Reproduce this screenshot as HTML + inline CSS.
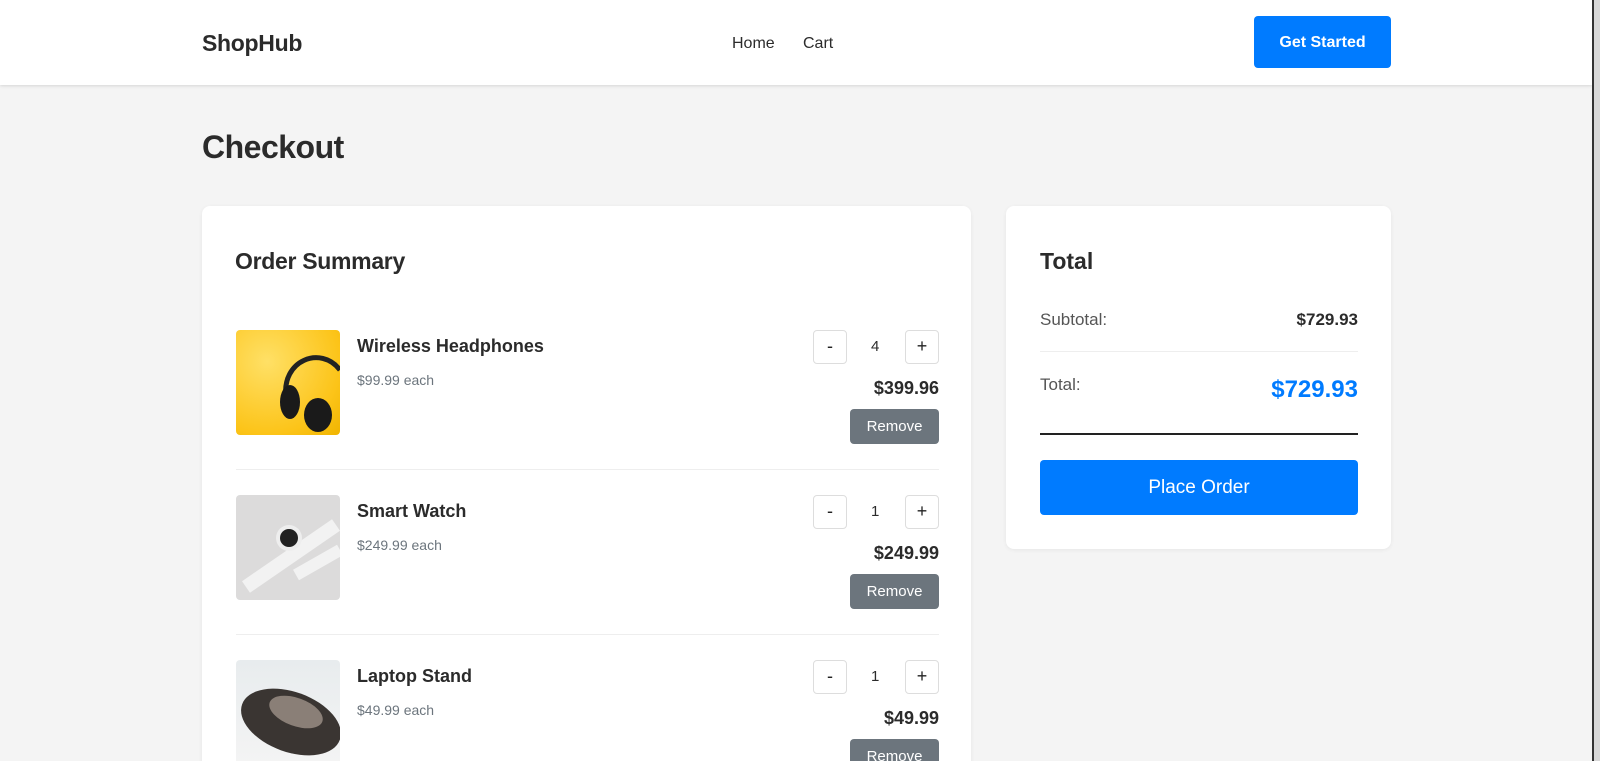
<!DOCTYPE html>
<html style="overflow:hidden;height:761px"><head><meta charset="utf-8"><style>
*{margin:0;padding:0;box-sizing:border-box}
body{width:1600px;height:761px;overflow:hidden;background:#f4f4f4;font-family:"Liberation Sans",sans-serif;color:#2b2b2b;position:relative}
.a{position:absolute;white-space:nowrap}
.nav{position:absolute;left:0;top:0;width:1592px;height:85px;background:#fff;box-shadow:0 1px 3px rgba(0,0,0,.12)}
.card{position:absolute;background:#fff;border-radius:8px;box-shadow:0 1px 4px rgba(0,0,0,.06)}
.qb{position:absolute;width:34px;height:34px;border:1px solid #ddd;border-radius:4px;background:#fff;font-size:18px;text-align:center;line-height:31px;color:#222}
.rm{position:absolute;width:89px;height:35px;background:#6c757d;color:#fff;border-radius:4px;font-size:15px;text-align:center;line-height:35px}
.hr{position:absolute;height:1px;background:#eee}
</style></head><body>
<div class="nav"></div>
<div class="a" style="left:202px;top:30px;font-size:23px;font-weight:bold;letter-spacing:-0.3px">ShopHub</div>
<div class="a" style="left:732px;top:35px;font-size:16px">Home</div>
<div class="a" style="left:803px;top:35px;font-size:16px">Cart</div>
<div class="a" style="left:1254px;top:16px;width:137px;height:52px;background:#007bff;color:#fff;border-radius:4px;font-size:16px;font-weight:bold;text-align:center;line-height:54px">Get Started</div>
<div class="a" style="left:202px;top:129px;font-size:32px;font-weight:bold;letter-spacing:-0.5px">Checkout</div>
<div style="position:absolute;left:1592px;top:0;width:8px;height:761px;background:#d8d8d8;border-left:2px solid #333"></div>

<div class="card" style="left:202px;top:206px;width:769px;height:600px"></div>
<div class="a" style="left:235px;top:248px;font-size:23px;font-weight:bold;letter-spacing:-0.3px">Order Summary</div>

<div class="a" style="left:236px;top:330px;width:104px;height:105px;border-radius:4px;background:radial-gradient(circle at 30% 30%,#ffe066,#fcc419 70%,#f0b400);overflow:hidden">
<svg width="104" height="105" viewBox="0 0 104 105"><path d="M50 68 C45 30,85 15,104 40" stroke="#222" stroke-width="5" fill="none"/><ellipse cx="54" cy="72" rx="10" ry="17" fill="#1a1a1a"/><ellipse cx="82" cy="85" rx="14" ry="17" fill="#1a1a1a"/></svg></div>
<div class="a" style="left:357px;top:336px;font-size:18px;font-weight:bold">Wireless Headphones</div>
<div class="a" style="left:357px;top:372px;font-size:14px;color:#6c757d">$99.99 each</div>
<div class="qb" style="left:813px;top:330px">-</div>
<div class="a" style="left:871px;top:338px;font-size:15px">4</div>
<div class="qb" style="left:905px;top:330px">+</div>
<div class="a" style="right:661px;top:378px;font-size:18px;font-weight:bold">$399.96</div>
<div class="rm" style="left:850px;top:409px">Remove</div>
<div class="hr" style="left:236px;top:469px;width:703px"></div>

<div class="a" style="left:236px;top:495px;width:104px;height:105px;border-radius:4px;background:#dcdbdb;overflow:hidden">
<svg width="104" height="105" viewBox="0 0 104 105"><path d="M10 92 L100 30" stroke="#f2f2f2" stroke-width="14"/><circle cx="53" cy="43" r="13" fill="#eee"/><circle cx="53" cy="43" r="9" fill="#222"/><path d="M60 80 L104 55" stroke="#f2f2f2" stroke-width="12"/></svg></div>
<div class="a" style="left:357px;top:501px;font-size:18px;font-weight:bold">Smart Watch</div>
<div class="a" style="left:357px;top:537px;font-size:14px;color:#6c757d">$249.99 each</div>
<div class="qb" style="left:813px;top:495px">-</div>
<div class="a" style="left:871px;top:503px;font-size:15px">1</div>
<div class="qb" style="left:905px;top:495px">+</div>
<div class="a" style="right:661px;top:543px;font-size:18px;font-weight:bold">$249.99</div>
<div class="rm" style="left:850px;top:574px">Remove</div>
<div class="hr" style="left:236px;top:634px;width:703px"></div>

<div class="a" style="left:236px;top:660px;width:104px;height:105px;border-radius:4px;background:linear-gradient(#e8ecee,#f4f4f4);overflow:hidden">
<svg width="104" height="105" viewBox="0 0 104 105"><ellipse cx="55" cy="62" rx="52" ry="30" fill="#3a3532" transform="rotate(20 55 62)"/><ellipse cx="60" cy="52" rx="28" ry="14" fill="#8a7f77" transform="rotate(20 60 52)"/></svg></div>
<div class="a" style="left:357px;top:666px;font-size:18px;font-weight:bold">Laptop Stand</div>
<div class="a" style="left:357px;top:702px;font-size:14px;color:#6c757d">$49.99 each</div>
<div class="qb" style="left:813px;top:660px">-</div>
<div class="a" style="left:871px;top:668px;font-size:15px">1</div>
<div class="qb" style="left:905px;top:660px">+</div>
<div class="a" style="right:661px;top:708px;font-size:18px;font-weight:bold">$49.99</div>
<div class="rm" style="left:850px;top:739px">Remove</div>

<div class="card" style="left:1006px;top:206px;width:385px;height:343px"></div>
<div class="a" style="left:1040px;top:248px;font-size:23px;font-weight:bold">Total</div>
<div class="a" style="left:1040px;top:310px;font-size:17px;color:#555">Subtotal:</div>
<div class="a" style="right:242px;top:310px;font-size:17px;font-weight:bold">$729.93</div>
<div class="hr" style="left:1040px;top:351px;width:318px"></div>
<div class="a" style="left:1040px;top:375px;font-size:17px;color:#555">Total:</div>
<div class="a" style="right:242px;top:376px;font-size:24px;font-weight:bold;color:#007bff">$729.93</div>
<div class="a" style="left:1040px;top:433px;width:318px;height:2px;background:#222"></div>
<div class="a" style="left:1040px;top:460px;width:318px;height:55px;background:#007bff;border-radius:4px;color:#fff;font-size:19px;text-align:center;line-height:55px">Place Order</div>
</body></html>
